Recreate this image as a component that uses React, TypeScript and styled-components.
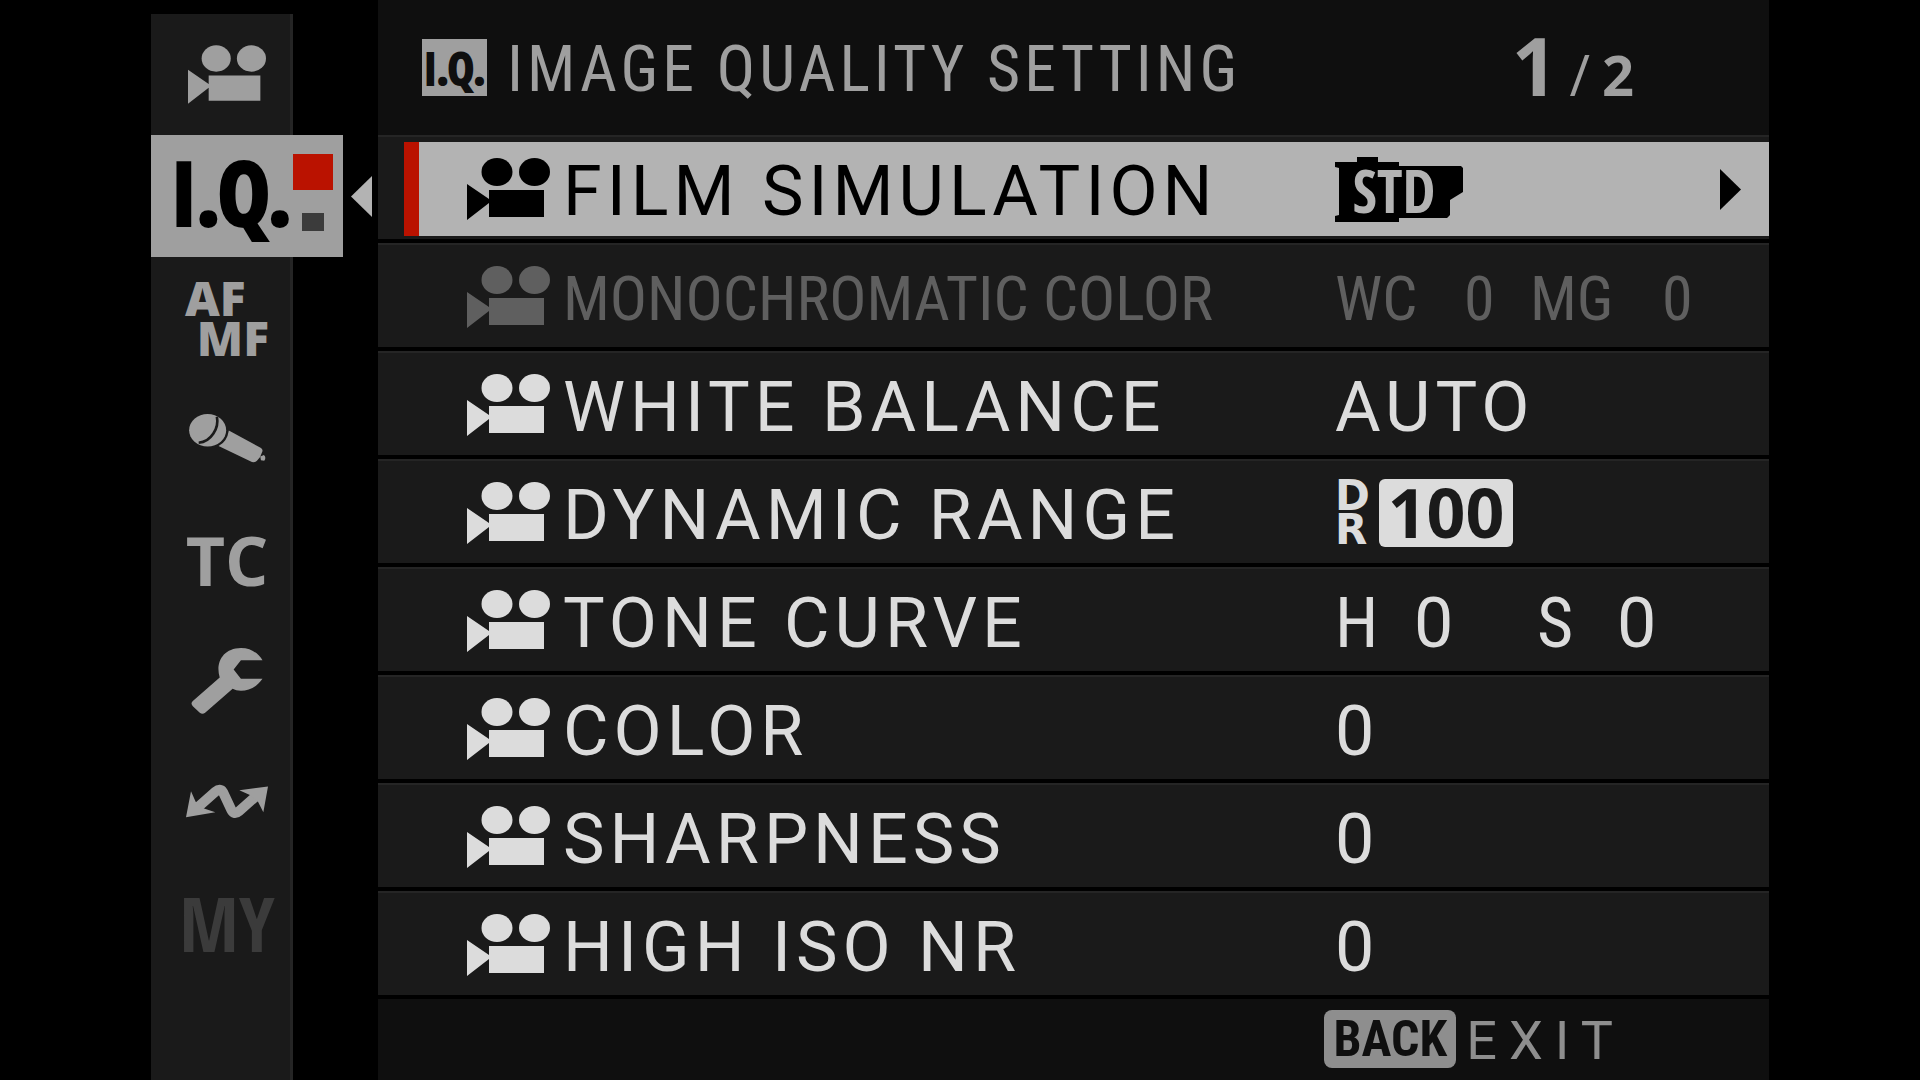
import React from 'react';
import styled, { createGlobalStyle, css } from 'styled-components';

const color = {
  panel: '#1a1a1a',
  bar: '#0f0f0f',
  edge: '#252525',
  highlight: '#b3b3b3',
  tab: '#9f9f9f',
  muted: '#8e8e8e',
  text: '#dcdcdc',
  disabled: '#5f5f5f',
  faint: '#3b3b3b',
  red: '#ba1200',
};

const font = {
  regular: 'Roboto, "Liberation Sans", sans-serif',
  condensed: '"Roboto Condensed", Roboto, sans-serif',
  narrow: '"Open Sans Condensed", "Open Sans", sans-serif',
  humanist: '"Open Sans", "Noto Sans", sans-serif',
  wide: '"DejaVu Sans", sans-serif',
};

const GlobalStyle = createGlobalStyle`
  *, *::before, *::after { box-sizing: border-box; }
  body { margin: 0; background: #000; font-family: ${font.regular}; }
  button { margin: 0; padding: 0; border: 0; background: none; color: inherit; font: inherit; text-align: left; cursor: pointer; }
  svg { display: block; flex: none; fill: currentColor; overflow: visible; }
`;

const Screen = styled.div`
  display: flex;
  min-height: 100vh;
  padding: 0 151px;
  background: #000;
`;

const Sidebar = styled.nav`
  flex: none;
  display: flex;
  flex-direction: column;
  width: 142px;
  margin: 14px 85px 0 0;
  background: ${color.panel};
  border-right: 3px solid ${color.edge};
`;

const Tab = styled.button<{ $faint?: boolean }>`
  display: flex;
  align-items: center;
  justify-content: center;
  height: 121px;
  padding-left: 13px;
  color: ${p => (p.$faint ? color.faint : color.tab)};
`;

const SelectedTab = styled.button`
  flex: none;
  display: flex;
  align-items: center;
  gap: 8px;
  width: 221px;
  color: ${color.highlight};
`;

const SelectedFace = styled.span`
  display: flex;
  align-items: center;
  justify-content: space-between;
  width: 192px;
  height: 122px;
  padding: 0 10px 8px 20px;
  background: ${color.tab};
  color: #000;
`;

const Monogram = styled.span<{ $size: number; $stroke: number }>`
  font: 700 ${p => p.$size}px/1 ${font.narrow};
  -webkit-text-stroke: ${p => p.$stroke}px currentColor;
`;

const PageMarks = styled.span`
  display: flex;
  flex-direction: column;
  align-items: center;
  gap: 23px;
`;

const Mark = styled.span<{ $current?: boolean }>`
  width: ${p => (p.$current ? 40 : 22)}px;
  height: ${p => (p.$current ? 36 : 18)}px;
  background: ${p => (p.$current ? color.red : color.faint)};
`;

const FocusMark = styled.span`
  display: flex;
  flex-direction: column;
  width: 84px;
  font: 800 48px/40px ${font.humanist};
`;

const FocusLine = styled.span<{ $end?: boolean }>`
  align-self: ${p => (p.$end ? 'flex-end' : 'flex-start')};
`;

const TimeCode = styled.span`
  font: 700 68px/1 ${font.humanist};
`;

const MyMenu = styled.span`
  font: 700 76px/1 ${font.narrow};
`;

const Panel = styled.main`
  flex: 1;
  min-width: 0;
  display: flex;
  flex-direction: column;
`;

const Header = styled.header`
  display: flex;
  align-items: center;
  justify-content: space-between;
  height: 135px;
  padding: 0 135px 0 44px;
  background: ${color.bar};
  color: ${color.tab};
`;

const Heading = styled.div`
  display: flex;
  align-items: center;
  gap: 20px;
`;

const HeadingBadge = styled.span`
  display: flex;
  align-items: center;
  justify-content: center;
  width: 65px;
  height: 57px;
  background: ${color.tab};
  color: ${color.bar};
`;

const Title = styled.h1`
  margin: 0;
  padding-top: 4px;
  font: 400 64px/80px ${font.condensed};
  letter-spacing: 4px;
  white-space: nowrap;
`;

const Pager = styled.div`
  display: flex;
  align-items: baseline;
  gap: 12px;
  padding-top: 4px;
  font: 700 56px/80px ${font.humanist};
`;

const PagerCurrent = styled.span`
  font-size: 80px;
`;

const PagerSlash = styled.span`
  font-weight: 400;
`;

const Menu = styled.ul`
  display: flex;
  flex-direction: column;
  gap: 4px;
  margin: 0 0 4px;
  padding: 0;
  list-style: none;
`;

const MenuItem = styled.li`
  display: flex;
  height: 104px;
  padding: 5px 0 3px 26px;
  background: ${color.panel};
  border-top: 2px solid ${color.edge};
`;

type RowState = 'normal' | 'selected' | 'disabled';

const Row = styled.button<{ $state: RowState }>`
  flex: 1;
  display: grid;
  grid-template-columns: 96px 1fr 406px 28px;
  align-items: center;
  padding: 0 0 0 48px;
  border-left: 15px solid transparent;
  font: 400 70px/80px ${font.regular};
  letter-spacing: 5px;
  white-space: nowrap;
  color: ${color.text};
  ${p => p.$state === 'selected' && css`
    background: ${color.highlight};
    border-left-color: ${color.red};
    color: #000;
  `}
  ${p => p.$state === 'disabled' && css`
    color: ${color.disabled};
    font: 400 62px/80px ${font.condensed};
    letter-spacing: 0;
  `}
`;

const Label = styled.span`
  padding-top: 4px;
`;

const Value = styled.span`
  display: flex;
  align-items: center;
  justify-content: space-between;
`;

const ToneValues = styled.span`
  display: grid;
  grid-template-columns: 79px 123px 80px auto;
  padding-top: 4px;
`;

const ToneName = styled.span`
  font-family: ${font.condensed};
`;

const MonoValues = styled.span`
  display: grid;
  grid-template-columns: 129px 66px 132px auto;
  padding-top: 4px;
`;

const RangeBadge = styled.span`
  display: flex;
  gap: 3px;
  letter-spacing: 0;
`;

const RangeLetters = styled.span`
  display: flex;
  flex-direction: column;
  width: 41px;
  font: 700 42px/34px ${font.wide};
`;

const RangeNumber = styled.span`
  width: 134px;
  border-radius: 6px;
  background: ${color.text};
  color: ${color.panel};
  font: 700 68px/65px ${font.humanist};
  text-align: center;
`;

const Footer = styled.footer`
  flex: 1;
  display: flex;
  align-items: flex-start;
  justify-content: flex-end;
  min-height: 81px;
  padding: 9px 144px 0 0;
  background: ${color.bar};
  color: ${color.muted};
`;

const BackButton = styled.button`
  display: flex;
  align-items: center;
  gap: 10px;
`;

const BackKey = styled.span`
  width: 132px;
  border-radius: 8px;
  background: ${color.muted};
  color: ${color.bar};
  font: 700 50px/58px ${font.condensed};
  text-align: center;
`;

const BackAction = styled.span`
  padding-top: 4px;
  font: 400 54px/58px ${font.regular};
  letter-spacing: 12px;
`;

const FilmText = styled.text`
  font: 700 59px ${font.narrow};
  fill: ${color.highlight};
  letter-spacing: 0;
`;

const CameraIcon = ({ width = 83 }: { width?: number }) => (
  <svg width={width} height={Math.round(width * 0.75)} viewBox="0 0 83 62" aria-hidden="true">
    <ellipse cx="30" cy="14" rx="15.5" ry="14" />
    <ellipse cx="67.5" cy="14" rx="15.5" ry="14" />
    <path d="M0 26 L22 41 V32 H77 V59 H22 V45 L0 62Z" />
  </svg>
);

const MicIcon = () => (
  <svg width="77" height="49" viewBox="145 100 232 148" aria-hidden="true">
    <ellipse cx="201" cy="149" rx="56" ry="49" />
    <path d="M229 108 C236 142 212 184 174 187" fill="none" stroke={color.panel} strokeWidth="8" />
    <path d="M265 150 L361 202 Q369 206 366 214 Q362 230 350 241 Q342 249 330 243 L234 197 Q260 184 265 150Z" />
    <path d="M360 228 L371 224 Q379 232 372 241 L362 240Z" />
  </svg>
);

const WrenchIcon = () => (
  <svg width="72" height="66" viewBox="153 803 216 199" aria-hidden="true">
    <path d="M368 840 H303 L281 868 L303 896 H368 C350 922 327 932 303 932 C293 932 285 930 278 926 L195 998 Q187 1004 179 998 L158 979 Q150 970 158 963 L239 892 C226 850 246 804 303 803 C335 803 357 821 368 840Z" />
  </svg>
);

const TransferIcon = () => (
  <svg width="82" height="35" viewBox="138 558 246 104" aria-hidden="true">
    <path d="M176 625 L226 581 Q241 568 249 582 L274 635 Q282 652 297 639 L347 595" fill="none" stroke="currentColor" strokeWidth="30" />
    <path d="M138 657 L153 579 L167 611 L190 630 L226 642Z" />
    <path d="M384 565 L370 642 L354 611 L333 592 L298 576Z" />
  </svg>
);

const ArrowIcon = ({ left }: { left?: boolean }) => (
  <svg width="21" height="41" viewBox="0 0 21 41" aria-hidden="true">
    <path d={left ? 'M21 0 V41 L0 20.5Z' : 'M0 0 V41 L21 20.5Z'} />
  </svg>
);

const FilmBadge = () => (
  <svg width="129" height="65" viewBox="0 0 129 65" role="img" aria-label="STD">
    <path d="M0 5 H22 V0 H43 V5 H64 V9 H126 L128 11 V35 L115 43 V58 L112 61 H64 V65 H0 V59 L4 58 V11 L0 10Z" />
    <FilmText x="59" y="56" textAnchor="middle">STD</FilmText>
  </svg>
);

type Item = { label: string; value: React.ReactNode; state?: RowState };

const items: Item[] = [
  { label: 'FILM SIMULATION', value: <><FilmBadge /><ArrowIcon /></>, state: 'selected' },
  {
    label: 'MONOCHROMATIC COLOR',
    value: <MonoValues><span>WC</span><span>0</span><span>MG</span><span>0</span></MonoValues>,
    state: 'disabled',
  },
  { label: 'WHITE BALANCE', value: <Label>AUTO</Label> },
  {
    label: 'DYNAMIC RANGE',
    value: (
      <RangeBadge>
        <RangeLetters><span>D</span><span>R</span></RangeLetters>
        <RangeNumber>100</RangeNumber>
      </RangeBadge>
    ),
  },
  {
    label: 'TONE CURVE',
    value: <ToneValues><ToneName>H</ToneName><span>0</span><ToneName>S</ToneName><span>0</span></ToneValues>,
  },
  { label: 'COLOR', value: <Label>0</Label> },
  { label: 'SHARPNESS', value: <Label>0</Label> },
  { label: 'HIGH ISO NR', value: <Label>0</Label> },
];

export default function App() {
  return (
    <Screen>
      <GlobalStyle />
      <Sidebar aria-label="Menu tabs">
        <Tab aria-label="Movie"><CameraIcon width={78} /></Tab>
        <SelectedTab aria-current="page">
          <SelectedFace>
            <Monogram $size={86} $stroke={4}>I.Q.</Monogram>
            <PageMarks><Mark $current /><Mark /></PageMarks>
          </SelectedFace>
          <ArrowIcon left />
        </SelectedTab>
        <Tab>
          <FocusMark><FocusLine>AF</FocusLine><FocusLine $end>MF</FocusLine></FocusMark>
        </Tab>
        <Tab aria-label="Audio"><MicIcon /></Tab>
        <Tab><TimeCode>TC</TimeCode></Tab>
        <Tab aria-label="Set up"><WrenchIcon /></Tab>
        <Tab aria-label="Connection"><TransferIcon /></Tab>
        <Tab $faint><MyMenu>MY</MyMenu></Tab>
      </Sidebar>
      <Panel>
        <Header>
          <Heading>
            <HeadingBadge><Monogram $size={44} $stroke={2}>I.Q.</Monogram></HeadingBadge>
            <Title>IMAGE QUALITY SETTING</Title>
          </Heading>
          <Pager><PagerCurrent>1</PagerCurrent><PagerSlash>/</PagerSlash><span>2</span></Pager>
        </Header>
        <Menu>
          {items.map(({ label, value, state = 'normal' }) => (
            <MenuItem key={label}>
              <Row $state={state} disabled={state === 'disabled'}>
                <CameraIcon />
                <Label>{label}</Label>
                <Value>{value}</Value>
              </Row>
            </MenuItem>
          ))}
        </Menu>
        <Footer>
          <BackButton><BackKey>BACK</BackKey><BackAction>EXIT</BackAction></BackButton>
        </Footer>
      </Panel>
    </Screen>
  );
}
